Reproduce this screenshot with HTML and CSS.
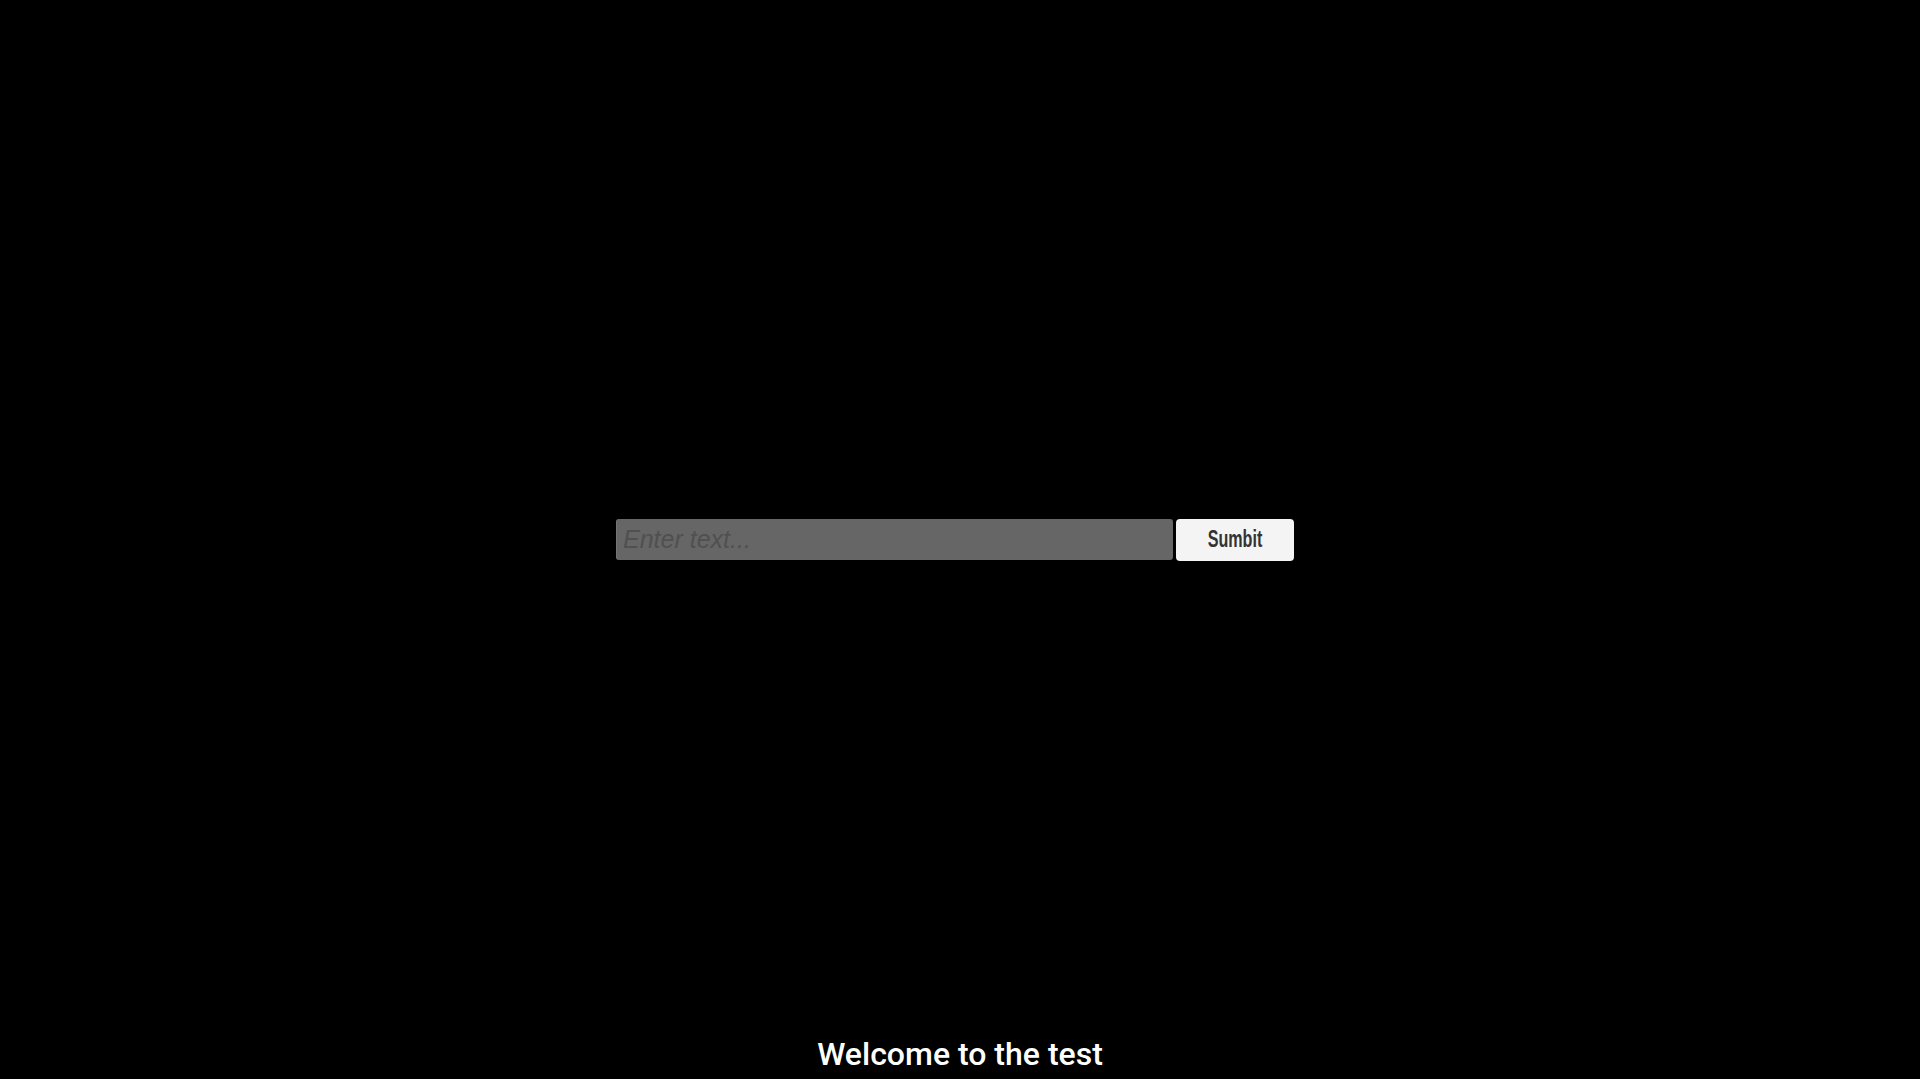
FILE: index.html
```html
<!DOCTYPE html>
<html lang="en">
<head>
<meta charset="utf-8">
<title>Test</title>
<link rel="stylesheet" href="styles.css">
</head>
<body>
<div class="page">
  <div class="spacer"></div>
  <form class="entry" onsubmit="return false;">
    <input class="entry-input" type="text" placeholder="Enter text...">
    <button class="entry-button" type="submit"><span class="entry-label">Sumbit</span></button>
  </form>
  <div class="footer">
    <h1 class="welcome">Welcome to the test</h1>
  </div>
</div>
</body>
</html>
```

FILE: styles.css
```css
html, body {
  margin: 0;
  padding: 0;
  background: #000;
}

.page {
  height: 100vh;
  display: grid;
  grid-template-rows: 1fr auto 1fr;
}

.entry {
  margin: 0;
  display: flex;
  justify-content: center;
  align-items: stretch;
  gap: 3px;
  padding-right: 10px;
}

.entry-input {
  width: 557px;
  height: 41px;
  box-sizing: border-box;
  border: none;
  border-left: 1px solid #747474;
  border-radius: 3px;
  background: #666666;
  padding: 0 6px;
  font-family: "Liberation Sans", Arial, sans-serif;
  font-size: 25px;
  font-style: italic;
  color: #222;
  outline: none;
}

.entry-input::placeholder {
  color: #505050;
  font-style: italic;
}

.entry-button {
  width: 118px;
  height: 42px;
  box-sizing: border-box;
  border: none;
  border-radius: 4px;
  background: #f4f4f4;
  color: #333;
  font-family: "Liberation Sans", Arial, sans-serif;
  font-weight: bold;
  font-size: 23px;
  padding: 0;
  cursor: pointer;
}

.entry-label {
  display: inline-block;
  transform: scaleX(0.7);
}

.footer {
  display: flex;
  justify-content: center;
  align-items: flex-end;
  padding-bottom: 6px;
}

.welcome {
  margin: 0;
  font-family: Roboto, "Noto Sans", sans-serif;
  font-weight: 500;
  font-size: 32px;
  color: #fff;
}
```
